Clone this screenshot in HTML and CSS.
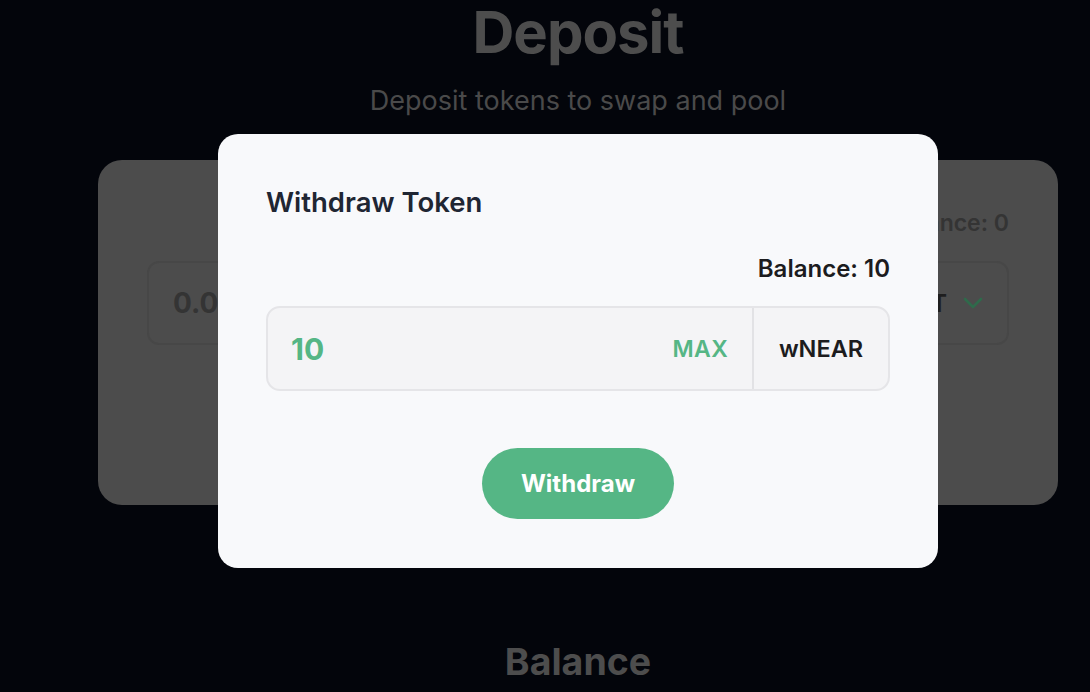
FILE: index.html
```html
<!DOCTYPE html>
<html>
<head>
<meta charset="utf-8">
<link rel="stylesheet" href="styles.css">
</head>
<body>
<main class="page">
  <h1 class="page-title">Deposit</h1>
  <p class="page-sub">Deposit tokens to swap and pool</p>
  <section class="card">
    <div class="card-balance">Balance: 0</div>
    <div class="card-input">
      <span class="card-amount">0.0</span>
      <span class="card-token">USDT <svg class="chev" width="20" height="12" viewBox="0 0 20 12"><path d="M2 2 L10 10 L18 2" fill="none" stroke="#2f6a4b" stroke-width="2.6" stroke-linecap="round" stroke-linejoin="round"/></svg></span>
    </div>
  </section>
  <h2 class="section-title">Balance</h2>
</main>
<div class="overlay">
  <div class="modal">
    <h3 class="modal-title">Withdraw Token</h3>
    <div class="modal-balance">Balance: 10</div>
    <div class="field">
      <div class="field-main">
        <span class="field-value">10</span>
        <span class="field-max">MAX</span>
      </div>
      <div class="field-token">wNEAR</div>
    </div>
    <div class="actions">
      <button class="btn">Withdraw</button>
    </div>
  </div>
</div>
</body>
</html>
```

FILE: styles.css
```css
* { box-sizing: border-box; }
html, body { margin: 0; height: 100%; }
body {
  background: #03050b;
  font-family: Inter, "Noto Sans", sans-serif;
  overflow: hidden;
}
.page {
  width: 960px;
  margin-left: 98px;
  display: flex;
  flex-direction: column;
  align-items: center;
}
.page-title {
  margin: 0;
  font-size: 58px;
  line-height: 64px;
  font-weight: 700;
  color: #4d4d4d;
  letter-spacing: -1px;
}
.page-sub {
  margin: 20px 0 0;
  font-size: 27px;
  line-height: 34px;
  color: #4a4a4a;
}
.card {
  margin-top: 42px;
  width: 960px;
  height: 345px;
  background: #4c4c4c;
  border-radius: 24px;
  padding: 48px 49px;
  display: flex;
  flex-direction: column;
}
.card-balance {
  align-self: flex-end;
  font-size: 23px;
  font-weight: 600;
  line-height: 30px;
  color: #343434;
}
.card-input {
  margin-top: 23px;
  height: 84px;
  border: 2px solid #474747;
  border-radius: 12px;
  display: flex;
  align-items: center;
  justify-content: space-between;
  padding: 0 24px;
}
.card-amount {
  font-size: 28px;
  font-weight: 700;
  color: #343434;
}
.card-token {
  font-size: 24px;
  font-weight: 600;
  color: #1e1e1e;
  display: flex;
  align-items: center;
  gap: 16px;
}
.section-title {
  margin: 134px 0 0;
  font-size: 37.5px;
  font-weight: 700;
  color: #4d4d4d;
}
.overlay {
  position: fixed;
  inset: 0;
  display: flex;
  justify-content: center;
  align-items: flex-start;
  padding: 134px 0 0 66px;
}
.modal {
  width: 720px;
  background: #f8f9fb;
  border-radius: 20px;
  padding: 52px 48px 49px;
  display: flex;
  flex-direction: column;
}
.modal-title {
  margin: 0;
  font-size: 27.5px;
  line-height: 32px;
  font-weight: 600;
  color: #1f2633;
}
.modal-balance {
  align-self: flex-end;
  margin-top: 37px;
  font-size: 24px;
  line-height: 28px;
  font-weight: 600;
  color: #1c1c1e;
}
.field {
  margin-top: 23px;
  height: 85px;
  border: 2px solid #e5e5e8;
  background: #f4f4f6;
  border-radius: 14px;
  display: flex;
}
.field-main {
  flex: 1;
  display: flex;
  align-items: center;
  justify-content: space-between;
  padding: 0 24px 0 23px;
  border-right: 2px solid #e2e2e5;
}
.field-value {
  font-size: 30px;
  font-weight: 700;
  color: #55b685;
}
.field-max {
  font-size: 23px;
  font-weight: 600;
  color: #55b685;
  letter-spacing: 0.3px;
}
.field-token {
  width: 134px;
  display: flex;
  align-items: center;
  justify-content: center;
  font-size: 23.5px;
  font-weight: 600;
  color: #1c1c1e;
}
.actions {
  margin-top: 57px;
  display: flex;
  justify-content: center;
}
.btn {
  width: 192px;
  height: 71px;
  border: none;
  border-radius: 36px;
  background: #55b685;
  color: #fff;
  font-family: Inter, "Noto Sans", sans-serif;
  font-size: 24px;
  font-weight: 700;
}
```
